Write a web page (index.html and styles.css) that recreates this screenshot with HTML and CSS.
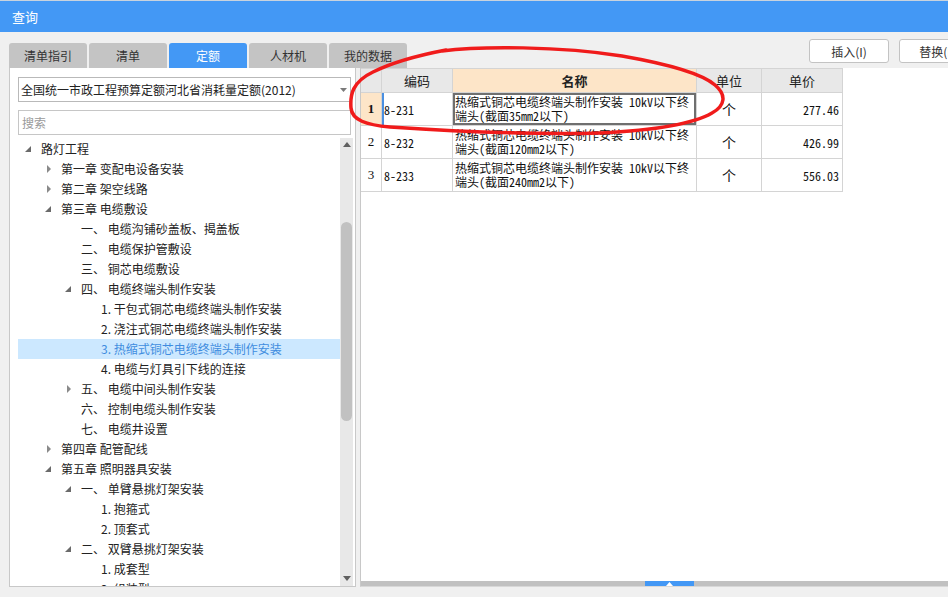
FILE: index.html
```html
<!DOCTYPE html>
<html lang="zh-CN">
<head>
<meta charset="utf-8">
<title>查询</title>
<link rel="stylesheet" href="styles.css">
</head>
<body>
<div class="app">
  <div class="titlebar">查询</div>
  <div class="toolbar">
    <div class="tabs">
      <div class="tab">清单指引</div>
      <div class="tab">清单</div>
      <div class="tab active">定额</div>
      <div class="tab">人材机</div>
      <div class="tab">我的数据</div>
    </div>
    <div class="actions">
      <button class="btn">插入(I)</button>
      <button class="btn">替换(R)</button>
    </div>
  </div>
  <div class="main">
    <div class="left">
      <div class="select">
        <span>全国统一市政工程预算定额河北省消耗量定额(2012)</span>
        <svg class="caret" width="7" height="4" viewBox="0 0 7 4"><path d="M0 0H7L3.5 4Z" fill="#7a7a7a"/></svg>
      </div>
      <div class="search">搜索</div>
      <div class="treewrap">
        <ul class="tree">
          <li class="row l0"><span class="tg open"></span><span>路灯工程</span></li>
          <li class="row l1"><span class="tg closed"></span><span>第一章 变配电设备安装</span></li>
          <li class="row l1"><span class="tg closed"></span><span>第二章 架空线路</span></li>
          <li class="row l1"><span class="tg open"></span><span>第三章 电缆敷设</span></li>
          <li class="row l2"><span class="tg"></span><span>一、 电缆沟铺砂盖板、揭盖板</span></li>
          <li class="row l2"><span class="tg"></span><span>二、 电缆保护管敷设</span></li>
          <li class="row l2"><span class="tg"></span><span>三、 铜芯电缆敷设</span></li>
          <li class="row l2"><span class="tg open"></span><span>四、 电缆终端头制作安装</span></li>
          <li class="row l3"><span class="tg"></span><span>1. 干包式铜芯电缆终端头制作安装</span></li>
          <li class="row l3"><span class="tg"></span><span>2. 浇注式铜芯电缆终端头制作安装</span></li>
          <li class="row l3 selected"><span class="tg"></span><span>3. 热缩式铜芯电缆终端头制作安装</span></li>
          <li class="row l3"><span class="tg"></span><span>4. 电缆与灯具引下线的连接</span></li>
          <li class="row l2"><span class="tg closed"></span><span>五、 电缆中间头制作安装</span></li>
          <li class="row l2"><span class="tg"></span><span>六、 控制电缆头制作安装</span></li>
          <li class="row l2"><span class="tg"></span><span>七、 电缆井设置</span></li>
          <li class="row l1"><span class="tg closed"></span><span>第四章 配管配线</span></li>
          <li class="row l1"><span class="tg open"></span><span>第五章 照明器具安装</span></li>
          <li class="row l2"><span class="tg open"></span><span>一、 单臂悬挑灯架安装</span></li>
          <li class="row l3"><span class="tg"></span><span>1. 抱箍式</span></li>
          <li class="row l3"><span class="tg"></span><span>2. 顶套式</span></li>
          <li class="row l2"><span class="tg open"></span><span>二、 双臂悬挑灯架安装</span></li>
          <li class="row l3"><span class="tg"></span><span>1. 成套型</span></li>
          <li class="row l3"><span class="tg"></span><span>2. 组装型</span></li>
        </ul>
        <div class="vscroll">
          <div class="arrow"><svg width="8" height="5" viewBox="0 0 8 5"><path d="M0 5H8L4 0Z" fill="#606060"/></svg></div>
          <div class="thumb"></div>
          <div class="fill"></div>
          <div class="arrow down"><svg width="8" height="5" viewBox="0 0 8 5"><path d="M0 0H8L4 5Z" fill="#606060"/></svg></div>
        </div>
      </div>
    </div>
    <div class="right">
      <div class="grid">
        <div class="c h"></div>
        <div class="c h center">编码</div>
        <div class="c h center hl">名称</div>
        <div class="c h center">单位</div>
        <div class="c h center">单价</div>

        <div class="c rn cur">1</div>
        <div class="c code focus">8-231</div>
        <div class="c name active">热缩式铜芯电缆终端头制作安装 10kV以下终端头(截面35mm2以下)</div>
        <div class="c unit">个</div>
        <div class="c price">277.46</div>

        <div class="c rn">2</div>
        <div class="c code">8-232</div>
        <div class="c name">热缩式铜芯电缆终端头制作安装 10kV以下终端头(截面120mm2以下)</div>
        <div class="c unit">个</div>
        <div class="c price">426.99</div>

        <div class="c rn">3</div>
        <div class="c code">8-233</div>
        <div class="c name">热缩式铜芯电缆终端头制作安装 10kV以下终端头(截面240mm2以下)</div>
        <div class="c unit">个</div>
        <div class="c price">556.03</div>
      </div>
      <div class="blank"></div>
      <div class="hscroll">
        <div class="hthumb"><svg width="7" height="4" viewBox="0 0 7 4"><path d="M0 4H7L3.5 0Z" fill="#ffffff"/></svg></div>
      </div>
    </div>
  </div>
  <svg class="annot" width="948" height="597" viewBox="0 0 948 597">
    <path d="M442 51 C480 46 560 46 622 56 C662 63 700 72 715 85 C727 95 725 106 712 113 C695 123 660 130 600 133 C530 135 450 131 390 127 C366 125 352 120 351 108 C350 95 352 82 373 72 C395 61 420 55 446 50" fill="none" stroke="#f01b1b" stroke-width="3.5" stroke-linecap="round"/>
  </svg>
</div>
</body>
</html>
```

FILE: styles.css
```css
* { box-sizing: border-box; }
html, body {
  margin: 0;
  padding: 0;
  width: 948px;
  height: 597px;
  overflow: hidden;
  background: #f0f0f0;
}
body {
  font-family: "Noto Sans CJK SC", "Microsoft YaHei", sans-serif;
  font-size: 12px;
  color: #222;
}
.app {
  position: relative;
  width: 990px;
  height: 597px;
}
.titlebar {
  height: 32px;
  border-top: 1px solid #c9d3de;
  background: #4398f5;
  color: #fff;
  font-size: 13px;
  line-height: 31px;
  padding-left: 12px;
}
.toolbar {
  height: 36px;
  display: flex;
  align-items: flex-end;
  padding: 0 11px 0 9px;
}
.tabs {
  display: flex;
  gap: 2px;
}
.tab {
  width: 78px;
  height: 25px;
  line-height: 25px;
  text-align: center;
  background: #c4c4c4;
  color: #333;
  border-radius: 3px 3px 0 0;
  font-size: 12px;
}
.tab.active {
  background: #4398f5;
  color: #fff;
}
.actions {
  margin-left: auto;
  align-self: flex-start;
  margin-top: 7px;
  display: flex;
  gap: 10px;
}
.btn {
  width: 80px;
  height: 24px;
  background: #fff;
  border: 1px solid #c3c3c3;
  border-radius: 3px;
  font-family: inherit;
  font-size: 12px;
  color: #333;
  padding: 0;
}
.main {
  height: 519px;
  display: flex;
  gap: 4px;
  padding-left: 9px;
}
.left {
  width: 347px;
  background: #fff;
  border: 1px solid #c8c8c8;
  border-top: none;
  padding: 9px 2px 0 8px;
  display: flex;
  flex-direction: column;
}
.select {
  width: 333px;
  height: 25px;
  border: 1px solid #b9b9b9;
  display: flex;
  align-items: center;
  padding-left: 2px;
  padding-right: 3px;
  color: #222;
  font-size: 12px;
}
.select span { flex: 1; }
.caret { margin-top: 1px; }
.search {
  width: 333px;
  height: 25px;
  margin-top: 8px;
  border: 1px solid #c6c6c6;
  padding-left: 3px;
  line-height: 23px;
  color: #9a9a9a;
}
.treewrap {
  margin-top: 3px;
  flex: 1;
  display: flex;
  min-height: 0;
}
.tree {
  list-style: none;
  margin: 0;
  padding: 1px 0 0 0;
  width: 322px;
  overflow: hidden;
}
.row {
  height: 20px;
  line-height: 20px;
  display: flex;
  align-items: center;
  white-space: pre;
  color: #222;
}
.row.l0 { padding-left: 7px; }
.row.l1 { padding-left: 27px; }
.row.l2 { padding-left: 47px; }
.row.l3 { padding-left: 67px; }
.row.selected {
  background: #cce8ff;
  color: #3f8de0;
}
.tg {
  width: 16px;
  height: 20px;
  flex: none;
  position: relative;
}
.tg.open::before {
  content: "";
  position: absolute;
  left: 0;
  top: 7px;
  width: 0;
  height: 0;
  border-left: 6px solid transparent;
  border-bottom: 6px solid #6a6a6a;
}
.tg.closed::before {
  content: "";
  position: absolute;
  left: 2px;
  top: 6px;
  width: 0;
  height: 0;
  border-top: 4px solid transparent;
  border-bottom: 4px solid transparent;
  border-left: 4px solid #8a8a8a;
}
.vscroll {
  width: 13px;
  background: #e8e8e8;
  display: flex;
  flex-direction: column;
  align-items: center;
}
.arrow {
  height: 12px;
  display: flex;
  align-items: center;
  justify-content: center;
  padding-top: 1px;
}
.arrow.down { padding-top: 0; padding-bottom: 3px; }
.thumb {
  margin-top: 72px;
  width: 11px;
  height: 199px;
  background: #c1c1c1;
  border-radius: 6px;
}
.fill { flex: 1; }
.right {
  flex: 1;
  background: #fff;
  border-left: 1px solid #c8c8c8;
  border-bottom: 1px solid #d8d8d8;
  display: flex;
  flex-direction: column;
}
.grid {
  display: grid;
  grid-template-columns: 21px 71px 244px 65px 81px;
  grid-template-rows: 25px;
  grid-auto-rows: 33px;
  width: 482px;
}
.c {
  border-right: 1px solid #d4d4d4;
  border-bottom: 1px solid #d4d4d4;
  display: flex;
  align-items: center;
  font-family: "Noto Sans Mono CJK SC", "Noto Sans CJK SC", monospace;
  font-size: 12px;
  color: #111;
  min-width: 0;
}
.c.h {
  background: #e8e8e8;
  border-top: 1px solid #d4d4d4;
  font-family: "Noto Sans CJK SC", sans-serif;
  font-size: 13px;
  color: #222;
}
.center { justify-content: center; }
.c.h.hl {
  background: #fde5c8;
  font-weight: bold;
}
.rn {
  justify-content: center;
  font-family: "Liberation Serif", serif;
  font-size: 13px;
}
.rn.cur {
  background: #fde5c8;
  font-weight: bold;
}
.code { padding-left: 2px; }
.code.focus { box-shadow: inset 2px 0 0 #4a90e2; }
.name {
  padding: 0 6px 0 2px;
  line-height: 14px;
  word-break: break-all;
}
.name.active { box-shadow: inset 0 0 0 2px #6f6f6f; }
.unit {
  justify-content: center;
  font-family: "Noto Sans CJK SC", sans-serif;
  font-size: 14px;
}
.price {
  justify-content: flex-end;
  padding-right: 3px;
}
.blank { flex: 1; }
.hscroll {
  height: 5px;
  background: #c1c1c1;
  display: flex;
}
.hthumb {
  margin-left: 284px;
  width: 49px;
  height: 5px;
  background: #4398f5;
  display: flex;
  align-items: flex-end;
  justify-content: center;
}
.hthumb svg { display: block; }
.annot {
  position: absolute;
  left: 0;
  top: 0;
  pointer-events: none;
}
```
